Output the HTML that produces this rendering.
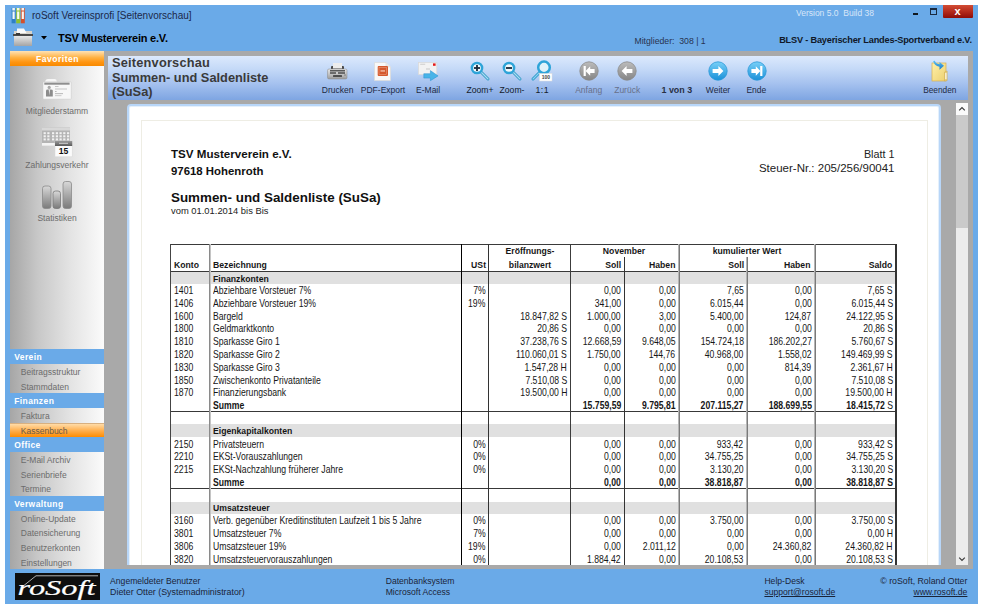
<!DOCTYPE html>
<html><head><meta charset="utf-8">
<style>
*{margin:0;padding:0;box-sizing:border-box}
html,body{width:983px;height:610px;overflow:hidden;background:#fff;font-family:"Liberation Sans",sans-serif}
.a{position:absolute}
.t{position:absolute;line-height:0;white-space:pre}
svg{position:absolute;overflow:visible}
</style></head><body>

<div class='a' style='left:5px;top:5px;width:973px;height:599px;background:#6aaae8'></div>
<div class='a' style='left:10px;top:51px;width:963px;height:518px;background:#a9a9a9'></div>
<svg style="left:11px;top:7px" width="15" height="17" viewBox="0 0 15 17">
<rect x="0.6" y="1" width="4" height="15.3" fill="#2f80c4"/><rect x="1.3" y="1" width="2.6" height="2.5" fill="#f0f4f8"/><rect x="1.5" y="4.5" width="2.2" height="7.5" fill="#f4f8fc"/>
<rect x="5.2" y="1" width="4" height="15.3" fill="#90c030"/><rect x="5.9" y="1" width="2.6" height="2.5" fill="#f4f8ec"/><rect x="6.1" y="4.5" width="2.2" height="7.5" fill="#f8fcf0"/>
<rect x="9.8" y="1" width="4" height="15.3" fill="#d4502c"/><rect x="10.5" y="1" width="2.6" height="2.5" fill="#f8f0ec"/><rect x="10.7" y="4.5" width="2.2" height="7.5" fill="#fcf4f0"/>
</svg>
<div class='t' style='top:15.54px;font-size:10px;font-weight:normal;color:#1c2848;left:32px;'>roSoft Vereinsprofi [Seitenvorschau]</div>
<div class='t' style='top:13.05px;font-size:8.5px;font-weight:normal;color:#d8e6f8;left:796px;'>Version 5.0&nbsp; Build 38</div>
<div class='a' style='left:913px;top:12.5px;width:5px;height:2px;background:#101820'></div>
<div class='a' style='left:930px;top:8px;width:7px;height:7px;border:1px solid #1a2a40;border-top-width:2px'></div>
<div class='a' style='left:943px;top:5px;width:30px;height:13px;background:linear-gradient(#d24c34,#b42a1c 50%,#8e0c08);border-radius:0 0 1px 1px'></div>
<div class='t' style='top:11.19px;font-size:11px;font-weight:bold;color:#fff;left:757.5px;width:400px;text-align:center;'>x</div>
<svg style="left:13px;top:28px" width="20" height="18" viewBox="0 0 20 18">
<defs><linearGradient id="fg" x1="0" y1="0" x2="0" y2="1"><stop offset="0" stop-color="#e8e8e8"/><stop offset="1" stop-color="#a4a4a4"/></linearGradient></defs>
<rect x="1" y="3" width="18" height="5" fill="#d8d4cc"/>
<path d="M4 0.5h7l2.5 4.5h-9.5z" fill="#fafafa"/>
<rect x="0" y="6" width="20" height="2" fill="#4a4a4a"/>
<rect x="3" y="5" width="4" height="2" fill="#3a3a3a"/>
<rect x="1" y="8" width="18" height="10" fill="url(#fg)"/>
</svg>
<svg style="left:41px;top:36px" width="6" height="4" viewBox="0 0 6 4"><path d="M0 0h6l-3 3.5z" fill="#000"/></svg>
<div class='t' style='top:38.19px;font-size:11px;font-weight:bold;color:#000;letter-spacing:-0.23px;left:58px;'>TSV Musterverein e.V.</div>
<div class='t' style='top:41.39px;font-size:8.7px;font-weight:normal;color:#283450;left:634.4px;'>Mitglieder:&nbsp; 308 | 1</div>
<div class='t' style='top:40.01px;font-size:9.2px;font-weight:bold;color:#101828;letter-spacing:-0.19px;right:11px;margin-right:0.19px;'>BLSV - Bayerischer Landes-Sportverband e.V.</div>
<div class='a' style='left:10px;top:51px;width:94px;height:299px;background:linear-gradient(to right,#a6a6a6 0%,#c8c8c8 30%,#e4e4e4 65%,#fbfbfb 100%)'></div>
<div class='a' style='left:10px;top:51px;width:94px;height:15px;background:linear-gradient(#ffe2b4 0%,#ffb040 45%,#ff9410 75%,#f88a00 100%)'></div>
<div class='t' style='top:58.72px;font-size:8.6px;font-weight:bold;color:#fff;letter-spacing:0.5px;left:-142.5px;width:400px;text-align:center;'>Favoriten</div>
<svg style="left:43px;top:78px" width="29" height="22" viewBox="0 0 29 22">
<path d="M2 4 Q2.5 1 5 1 H12 Q13.5 1 14 4z" fill="#f6f6f6"/>
<rect x="0" y="3.8" width="28.3" height="17.4" rx="0.8" fill="#f7f7f7" stroke="#c4c4c4" stroke-width="0.5"/>
<rect x="1.3" y="4.6" width="25.3" height="2.1" fill="#8e8e8e"/>
<circle cx="6.2" cy="9.4" r="1.6" fill="#a8a8a8"/>
<path d="M3 18.5 V12.8 Q3 11.6 4.6 11.6 H7.8 Q9.8 11.6 9.8 12.8 V18.5z" fill="#8c8c8c"/>
<path d="M5.7 11.6 L6.4 17.5 L7.1 11.6z" fill="#e4e4e4"/>
<rect x="12" y="8.2" width="3.5" height="0.7" fill="#b0b0b0"/><rect x="12" y="10.6" width="12" height="0.8" fill="#b8b8b8"/>
<rect x="12" y="13.2" width="1.6" height="0.7" fill="#a0a0a0"/><rect x="12" y="15.3" width="8" height="0.8" fill="#a8a8a8"/><rect x="12" y="17.4" width="6.5" height="0.7" fill="#b8b8b8"/>
</svg>
<div class='t' style='top:111.15px;font-size:8.5px;font-weight:normal;color:#6c6c6c;left:-143px;width:400px;text-align:center;'>Mitgliederstamm</div>
<svg style="left:42px;top:127px" width="31" height="31" viewBox="0 0 31 31"><rect x="0" y="0.5" width="28" height="18.5" fill="#b4b4b4"/><rect x="0" y="0.5" width="28" height="3" fill="#d8d8d8"/><rect x="1.6" y="5.2" width="2.2" height="2" fill="#f2f2f2"/><rect x="5.3" y="5.2" width="2.2" height="2" fill="#f2f2f2"/><rect x="10.0" y="5.2" width="2.2" height="2" fill="#f2f2f2"/><rect x="13.8" y="5.2" width="2.2" height="2" fill="#f2f2f2"/><rect x="17.5" y="5.2" width="2.2" height="2" fill="#f2f2f2"/><rect x="21.2" y="5.2" width="2.2" height="2" fill="#f2f2f2"/><rect x="25.0" y="5.2" width="2.2" height="2" fill="#f2f2f2"/><rect x="1.6" y="8.3" width="2.2" height="2" fill="#f2f2f2"/><rect x="5.3" y="8.3" width="2.2" height="2" fill="#f2f2f2"/><rect x="10.0" y="8.3" width="2.2" height="2" fill="#f2f2f2"/><rect x="13.8" y="8.3" width="2.2" height="2" fill="#f2f2f2"/><rect x="17.5" y="8.3" width="2.2" height="2" fill="#f2f2f2"/><rect x="21.2" y="8.3" width="2.2" height="2" fill="#f2f2f2"/><rect x="25.0" y="8.3" width="2.2" height="2" fill="#f2f2f2"/><rect x="1.6" y="11.4" width="2.2" height="2" fill="#f2f2f2"/><rect x="5.3" y="11.4" width="2.2" height="2" fill="#f2f2f2"/><rect x="10.0" y="11.4" width="2.2" height="2" fill="#f2f2f2"/><rect x="13.8" y="11.4" width="2.2" height="2" fill="#f2f2f2"/><rect x="17.5" y="11.4" width="2.2" height="2" fill="#f2f2f2"/><rect x="21.2" y="11.4" width="2.2" height="2" fill="#f2f2f2"/><rect x="25.0" y="11.4" width="2.2" height="2" fill="#f2f2f2"/><rect x="0" y="16" width="13" height="2.8" fill="#f4f4f4"/><defs><linearGradient id="calh" x1="0" y1="0" x2="0" y2="1"><stop offset="0" stop-color="#9a9a9a"/><stop offset="1" stop-color="#5a5a5a"/></linearGradient></defs><rect x="13" y="14" width="17.2" height="15.8" fill="#fbfbfb" stroke="#d8d8d8" stroke-width="0.5"/><rect x="13" y="14" width="17.2" height="5" fill="url(#calh)"/><rect x="17" y="15.8" width="9" height="1" fill="#d0d0d0"/><text x="21.6" y="27" font-family="Liberation Sans" font-weight="bold" font-size="8.6" text-anchor="middle" fill="#111">15</text></svg>
<div class='t' style='top:165.05px;font-size:8.5px;font-weight:normal;color:#6c6c6c;left:-143px;width:400px;text-align:center;'>Zahlungsverkehr</div>
<svg style="left:42px;top:181px" width="30" height="28" viewBox="0 0 30 28">
<defs><linearGradient id="bg1" x1="0" y1="0" x2="0" y2="1"><stop offset="0" stop-color="#d8d8d8"/><stop offset="1" stop-color="#7a7a7a"/></linearGradient></defs>
<rect x="0.5" y="5" width="8.5" height="22.5" rx="2.5" fill="url(#bg1)" stroke="#8a8a8a" stroke-width="0.8"/>
<rect x="11" y="10" width="7.5" height="17.5" rx="2.5" fill="url(#bg1)" stroke="#7a7a7a" stroke-width="0.8"/>
<rect x="21" y="0.5" width="8.5" height="27" rx="2.5" fill="url(#bg1)" stroke="#8a8a8a" stroke-width="0.8"/>
</svg>
<div class='t' style='top:217.75px;font-size:8.5px;font-weight:normal;color:#6c6c6c;left:-143px;width:400px;text-align:center;'>Statistiken</div>
<div class='a' style='left:10px;top:349px;width:94px;height:15px;background:#6aaae8'></div>
<div class='t' style='top:357.05px;font-size:8.5px;font-weight:bold;color:#fff;letter-spacing:0.4px;left:14.2px;'>Verein</div>
<div class='a' style='left:10px;top:364px;width:94px;height:15px;background:linear-gradient(to right,#a6a6a6 0%,#c8c8c8 30%,#e4e4e4 65%,#fbfbfb 100%)'></div>
<div class='t' style='top:371.55px;font-size:8.5px;font-weight:normal;color:#6c6c6c;left:20.8px;'>Beitragsstruktur</div>
<div class='a' style='left:10px;top:379px;width:94px;height:14px;background:linear-gradient(to right,#a6a6a6 0%,#c8c8c8 30%,#e4e4e4 65%,#fbfbfb 100%)'></div>
<div class='t' style='top:386.55px;font-size:8.5px;font-weight:normal;color:#6c6c6c;left:20.8px;'>Stammdaten</div>
<div class='a' style='left:10px;top:393px;width:94px;height:15px;background:#6aaae8'></div>
<div class='t' style='top:401.05px;font-size:8.5px;font-weight:bold;color:#fff;letter-spacing:0.4px;left:14.2px;'>Finanzen</div>
<div class='a' style='left:10px;top:408px;width:94px;height:15px;background:linear-gradient(to right,#a6a6a6 0%,#c8c8c8 30%,#e4e4e4 65%,#fbfbfb 100%)'></div>
<div class='t' style='top:415.55px;font-size:8.5px;font-weight:normal;color:#6c6c6c;left:20.8px;'>Faktura</div>
<div class='a' style='left:10px;top:423px;width:94px;height:14px;background:linear-gradient(#ffdca8 0%,#ffb050 50%,#ff8c00 100%);border-top:1px solid #d8b080'></div>
<div class='t' style='top:430.55px;font-size:8.5px;font-weight:normal;color:#6a5a48;left:20.8px;'>Kassenbuch</div>
<div class='a' style='left:10px;top:437px;width:94px;height:15px;background:#6aaae8'></div>
<div class='t' style='top:445.05px;font-size:8.5px;font-weight:bold;color:#fff;letter-spacing:0.4px;left:14.2px;'>Office</div>
<div class='a' style='left:10px;top:452px;width:94px;height:15px;background:linear-gradient(to right,#a6a6a6 0%,#c8c8c8 30%,#e4e4e4 65%,#fbfbfb 100%)'></div>
<div class='t' style='top:459.55px;font-size:8.5px;font-weight:normal;color:#6c6c6c;left:20.8px;'>E-Mail Archiv</div>
<div class='a' style='left:10px;top:467px;width:94px;height:14px;background:linear-gradient(to right,#a6a6a6 0%,#c8c8c8 30%,#e4e4e4 65%,#fbfbfb 100%)'></div>
<div class='t' style='top:474.55px;font-size:8.5px;font-weight:normal;color:#6c6c6c;left:20.8px;'>Serienbriefe</div>
<div class='a' style='left:10px;top:481px;width:94px;height:15px;background:linear-gradient(to right,#a6a6a6 0%,#c8c8c8 30%,#e4e4e4 65%,#fbfbfb 100%)'></div>
<div class='t' style='top:488.55px;font-size:8.5px;font-weight:normal;color:#6c6c6c;left:20.8px;'>Termine</div>
<div class='a' style='left:10px;top:496px;width:94px;height:15px;background:#6aaae8'></div>
<div class='t' style='top:504.05px;font-size:8.5px;font-weight:bold;color:#fff;letter-spacing:0.4px;left:14.2px;'>Verwaltung</div>
<div class='a' style='left:10px;top:511px;width:94px;height:14px;background:linear-gradient(to right,#a6a6a6 0%,#c8c8c8 30%,#e4e4e4 65%,#fbfbfb 100%)'></div>
<div class='t' style='top:518.55px;font-size:8.5px;font-weight:normal;color:#6c6c6c;left:20.8px;'>Online-Update</div>
<div class='a' style='left:10px;top:525px;width:94px;height:15px;background:linear-gradient(to right,#a6a6a6 0%,#c8c8c8 30%,#e4e4e4 65%,#fbfbfb 100%)'></div>
<div class='t' style='top:532.55px;font-size:8.5px;font-weight:normal;color:#6c6c6c;left:20.8px;'>Datensicherung</div>
<div class='a' style='left:10px;top:540px;width:94px;height:15px;background:linear-gradient(to right,#a6a6a6 0%,#c8c8c8 30%,#e4e4e4 65%,#fbfbfb 100%)'></div>
<div class='t' style='top:547.55px;font-size:8.5px;font-weight:normal;color:#6c6c6c;left:20.8px;'>Benutzerkonten</div>
<div class='a' style='left:10px;top:555px;width:94px;height:14px;background:linear-gradient(to right,#a6a6a6 0%,#c8c8c8 30%,#e4e4e4 65%,#fbfbfb 100%)'></div>
<div class='t' style='top:562.55px;font-size:8.5px;font-weight:normal;color:#6c6c6c;left:20.8px;'>Einstellungen</div>
<div class='a' style='left:108px;top:56px;width:860px;height:44px;background:linear-gradient(#dce9fd 0%,#c4d9f7 30%,#a6c2ef 62%,#7ea5e2 100%)'></div>
<div class='t' style='top:63.36px;font-size:12.8px;font-weight:bold;color:#3a3a3a;letter-spacing:0.2px;left:112px;'>Seitenvorschau</div>
<div class='t' style='top:77.66px;font-size:12.8px;font-weight:bold;color:#3a3a3a;left:112px;'>Summen- und Saldenliste</div>
<div class='t' style='top:91.96px;font-size:12.8px;font-weight:bold;color:#3a3a3a;left:112px;'>(SuSa)</div>
<svg style="left:326px;top:62px" width="22" height="18" viewBox="0 0 22 18">
<defs><linearGradient id="pg" x1="0" y1="0" x2="0" y2="1"><stop offset="0" stop-color="#e4e4e4"/><stop offset="0.5" stop-color="#c4c4c4"/><stop offset="1" stop-color="#9a9a9a"/></linearGradient></defs>
<rect x="5" y="4" width="13" height="5" rx="1" fill="#4a4a4a"/>
<rect x="7" y="1" width="9" height="5.5" fill="#ececec"/>
<rect x="1.5" y="7" width="19.5" height="10" rx="1.5" fill="url(#pg)" stroke="#888" stroke-width="0.5"/>
<rect x="4" y="8" width="15" height="1.5" fill="#5a5a5a"/>
<rect x="4" y="10.2" width="6" height="1.6" fill="#555"/><rect x="12" y="10.2" width="7" height="1.6" fill="#555"/>
<rect x="7" y="13.3" width="9" height="1.5" rx="0.5" fill="#2e2e2e"/>
<rect x="18.5" y="12.5" width="1" height="1" fill="#444"/>
</svg>
<div class='t' style='top:90.25px;font-size:8.5px;font-weight:normal;color:#1e2a44;left:137.60000000000002px;width:400px;text-align:center;'>Drucken</div>
<svg style="left:374px;top:62px" width="17" height="19" viewBox="0 0 17 19">
<path d="M0.5 0.5 H12 L16.5 5 V18.5 H0.5z" fill="#f8f8f8" stroke="#dcdcdc" stroke-width="0.8"/>
<path d="M12 0.5 V5 H16.5" fill="#e8e8e8" stroke="#dcdcdc" stroke-width="0.6"/>
<rect x="3.7" y="4" width="10.3" height="10" rx="1" fill="#d4582e"/>
<rect x="5" y="5.6" width="7.7" height="6.8" fill="none" stroke="#f0a888" stroke-width="0.5"/>
<rect x="6.5" y="8.4" width="4.5" height="1.1" fill="#f8d8c8"/>
</svg>
<div class='t' style='top:90.25px;font-size:8.5px;font-weight:normal;color:#1e2a44;left:183px;width:400px;text-align:center;'>PDF-Export</div>
<svg style="left:418px;top:62px" width="21" height="20" viewBox="0 0 21 20">
<rect x="0.4" y="0.4" width="18.4" height="12.2" fill="#f2f2f2" stroke="#d8d8d8" stroke-width="0.7"/>
<rect x="15" y="1.4" width="2.6" height="2.4" fill="#e41818"/>
<rect x="2.2" y="1.8" width="5" height="0.8" fill="#c4c4c4"/><rect x="8" y="6.6" width="4" height="0.8" fill="#bbb"/>
<path d="M5.8 11.7 H12.4 V8.6 L20.1 13.9 L12.4 18.7 V16.1 H5.8z" fill="#48b4e8" stroke="#2a90d0" stroke-width="0.5"/>
</svg>
<div class='t' style='top:90.25px;font-size:8.5px;font-weight:normal;color:#1e2a44;left:228.10000000000002px;width:400px;text-align:center;'>E-Mail</div>
<svg style="left:467.8px;top:60.099999999999994px" width="22" height="22" viewBox="0 0 22 22"><line x1="13" y1="12" x2="20" y2="19" stroke="#3a9cc8" stroke-width="3" stroke-linecap="round"/><line x1="13" y1="12" x2="20" y2="19" stroke="#a8dcf0" stroke-width="1.1" stroke-linecap="round"/><circle cx="9" cy="8" r="5.1" fill="#f4fafc" stroke="#2ea4d8" stroke-width="2.5"/><rect x="6" y="7.1" width="6" height="1.8" fill="#1a2a3a"/><rect x="8.1" y="5" width="1.8" height="6" fill="#1a2a3a"/></svg>
<div class='t' style='top:90.22px;font-size:8.6px;font-weight:normal;color:#141c2c;left:280px;width:400px;text-align:center;'>Zoom+</div>
<svg style="left:500.1px;top:60.099999999999994px" width="22" height="22" viewBox="0 0 22 22"><line x1="13" y1="12" x2="20" y2="19" stroke="#3a9cc8" stroke-width="3" stroke-linecap="round"/><line x1="13" y1="12" x2="20" y2="19" stroke="#a8dcf0" stroke-width="1.1" stroke-linecap="round"/><circle cx="9" cy="8" r="5.1" fill="#f4fafc" stroke="#2ea4d8" stroke-width="2.5"/><rect x="6" y="7.1" width="6" height="1.8" fill="#1a2a3a"/></svg>
<div class='t' style='top:90.22px;font-size:8.6px;font-weight:normal;color:#141c2c;left:312px;width:400px;text-align:center;'>Zoom-</div>
<svg style="left:531px;top:59px" width="23" height="23" viewBox="0 0 23 23">
<line x1="9" y1="13" x2="2" y2="20" stroke="#2a98c8" stroke-width="3" stroke-linecap="round"/>
<line x1="9" y1="13" x2="2" y2="20" stroke="#8ad0f0" stroke-width="1.2" stroke-linecap="round"/>
<circle cx="13" cy="8.4" r="5.8" fill="#dff2fa" stroke="#2ea4d8" stroke-width="2.5"/>
<rect x="8.5" y="14.5" width="12.5" height="7.5" fill="#fff" stroke="#ddd" stroke-width="0.5"/>
<text x="14.8" y="20.3" font-family="Liberation Sans" font-size="5" font-weight="bold" text-anchor="middle" fill="#444">100</text>
</svg>
<div class='t' style='top:90.15px;font-size:8.8px;font-weight:normal;color:#141c2c;letter-spacing:0.4px;left:342.29999999999995px;width:400px;text-align:center;'>1:1</div>
<svg style="left:578.8px;top:60.5px" width="20" height="20" viewBox="0 0 20 20"><defs><linearGradient id="nb588" x1="0" y1="0" x2="0" y2="1"><stop offset="0" stop-color="#bcbcbc"/><stop offset="1" stop-color="#858585"/></linearGradient></defs><circle cx="10" cy="10" r="9.2" fill="url(#nb588)" stroke="#8a8a8a" stroke-width="0.8"/><rect x="4.6" y="5" width="2.2" height="10" fill="#fff"/><path d="M6.6 10 L11.2 5.2 V8 H15.6 V12 H11.2 V14.8z" fill="#fff"/></svg>
<div class='t' style='top:90.25px;font-size:8.5px;font-weight:normal;color:#68708a;left:388.70000000000005px;width:400px;text-align:center;'>Anfang</div>
<svg style="left:617.3px;top:60.5px" width="20" height="20" viewBox="0 0 20 20"><defs><linearGradient id="nb627" x1="0" y1="0" x2="0" y2="1"><stop offset="0" stop-color="#bcbcbc"/><stop offset="1" stop-color="#858585"/></linearGradient></defs><circle cx="10" cy="10" r="9.2" fill="url(#nb627)" stroke="#8a8a8a" stroke-width="0.8"/><path d="M4.6 10 L9.6 5 V8 H15.4 V12 H9.6 V15z" fill="#fff"/></svg>
<div class='t' style='top:90.25px;font-size:8.5px;font-weight:normal;color:#68708a;left:427.20000000000005px;width:400px;text-align:center;'>Zurück</div>
<div class='t' style='top:90.12px;font-size:8.9px;font-weight:bold;color:#283044;left:476.79999999999995px;width:400px;text-align:center;'>1 von 3</div>
<svg style="left:708px;top:60.5px" width="20" height="20" viewBox="0 0 20 20"><defs><linearGradient id="nb718" x1="0" y1="0" x2="0" y2="1"><stop offset="0" stop-color="#78d0f8"/><stop offset="1" stop-color="#1a90d8"/></linearGradient></defs><circle cx="10" cy="10" r="9.2" fill="url(#nb718)" stroke="#2a98d8" stroke-width="0.8"/><path d="M15.4 10 L10.4 5 V8 H4.6 V12 H10.4 V15z" fill="#fff"/></svg>
<div class='t' style='top:90.25px;font-size:8.5px;font-weight:normal;color:#1e2a44;left:518px;width:400px;text-align:center;'>Weiter</div>
<svg style="left:746.5px;top:60.5px" width="20" height="20" viewBox="0 0 20 20"><defs><linearGradient id="nb756" x1="0" y1="0" x2="0" y2="1"><stop offset="0" stop-color="#78d0f8"/><stop offset="1" stop-color="#1a90d8"/></linearGradient></defs><circle cx="10" cy="10" r="9.2" fill="url(#nb756)" stroke="#2a98d8" stroke-width="0.8"/><rect x="13.2" y="5" width="2.2" height="10" fill="#fff"/><path d="M13.4 10 L8.8 5.2 V8 H4.4 V12 H8.8 V14.8z" fill="#fff"/></svg>
<div class='t' style='top:90.25px;font-size:8.5px;font-weight:normal;color:#1e2a44;left:556.4px;width:400px;text-align:center;'>Ende</div>
<svg style="left:931px;top:60px" width="19" height="22" viewBox="0 0 19 22">
<defs><linearGradient id="yg" x1="0" y1="0" x2="1" y2="1"><stop offset="0" stop-color="#fff0a8"/><stop offset="1" stop-color="#ecd070"/></linearGradient>
<linearGradient id="ag" x1="0" y1="0" x2="0" y2="1"><stop offset="0" stop-color="#5cc0f4"/><stop offset="1" stop-color="#1a78c8"/></linearGradient></defs>
<rect x="1" y="3" width="14" height="18" fill="url(#yg)" stroke="#d8b050" stroke-width="0.7"/>
<path d="M13.5 12 L16.2 11 V20.5 L13.5 21z" fill="#e8d080" stroke="#c8a040" stroke-width="0.4"/>
<rect x="14.4" y="13" width="1" height="6" fill="#fff"/>
<path d="M2.2 1 Q3 5.5 8.5 6.8 L8.5 9.8 L13 5.8 L8.5 2 L8.5 4.2 Q5 4 3.8 0.8z" fill="url(#ag)"/>
</svg>
<div class='t' style='top:90.32px;font-size:8.3px;font-weight:normal;color:#1e2a44;left:739.8px;width:400px;text-align:center;'>Beenden</div>
<div class="a" style="left:10px;top:100px;width:963px;height:465px;overflow:hidden">
<div class="a" style="left:117px;top:4px;width:814px;height:470px;background:#fff;border:2px solid #b8d6f8;border-radius:4px 4px 0 0;box-shadow:inset 0 0 0 1px #e4f0fc"></div>
<div class="a" style="left:131px;top:20px;width:787px;height:460px;border:1px solid #eeede4"></div>
</div>
<div class='t' style='top:154.18px;font-size:11.6px;font-weight:bold;color:#111;left:171px;'>TSV Musterverein e.V.</div>
<div class='t' style='top:170.95px;font-size:11.4px;font-weight:bold;color:#111;left:171px;'>97618 Hohenroth</div>
<div class='t' style='top:197.56px;font-size:13.4px;font-weight:bold;color:#111;left:171px;'>Summen- und Saldenliste (SuSa)</div>
<div class='t' style='top:211.04px;font-size:9.4px;font-weight:normal;color:#222;left:171px;'>vom 01.01.2014 bis Bis</div>
<div class='t' style='top:154.16px;font-size:10.8px;font-weight:normal;color:#222;right:88.5px;'>Blatt 1</div>
<div class='t' style='top:168.12px;font-size:11.5px;font-weight:normal;color:#222;right:88.5px;'>Steuer-Nr.: 205/256/90041</div>
<div class="a" style="left:0;top:0;width:983px;height:565px;overflow:hidden">
<div class='a' style='left:171px;top:272px;width:725px;height:12px;background:#e0e0e0'></div>
<div class='a' style='left:171px;top:424px;width:725px;height:13px;background:#e0e0e0'></div>
<div class='a' style='left:171px;top:502px;width:725px;height:12px;background:#e0e0e0'></div>
<div class='a' style='left:170px;top:244px;width:727px;height:1px;background:#3a3a3a'></div>
<div class='a' style='left:170px;top:271px;width:727px;height:1px;background:#383838'></div>
<div class='a' style='left:170px;top:411px;width:727px;height:1px;background:#383838'></div>
<div class='a' style='left:170px;top:488px;width:727px;height:1px;background:#383838'></div>
<div class='a' style='left:170px;top:244px;width:1px;height:330px;background:#444'></div>
<div class='a' style='left:209px;top:244px;width:1px;height:330px;background:#8a8a8a'></div>
<div class='a' style='left:210px;top:244px;width:1px;height:330px;background:#c4c4c4'></div>
<div class='a' style='left:461px;top:244px;width:1px;height:330px;background:#000'></div>
<div class='a' style='left:488px;top:244px;width:1px;height:330px;background:#333'></div>
<div class='a' style='left:570px;top:244px;width:1px;height:330px;background:#3c3c3c'></div>
<div class='a' style='left:624px;top:257px;width:1px;height:330px;background:#333'></div>
<div class='a' style='left:678px;top:244px;width:1px;height:330px;background:#b4b4b4'></div>
<div class='a' style='left:679px;top:244px;width:1px;height:330px;background:#7a7a7a'></div>
<div class='a' style='left:746px;top:257px;width:1px;height:330px;background:#b4b4b4'></div>
<div class='a' style='left:747px;top:257px;width:1px;height:330px;background:#7a7a7a'></div>
<div class='a' style='left:814px;top:244px;width:1px;height:330px;background:#b4b4b4'></div>
<div class='a' style='left:815px;top:244px;width:1px;height:330px;background:#7a7a7a'></div>
<div class='a' style='left:895px;top:244px;width:2px;height:330px;background:#333'></div>
<div class='t' style='top:264.98px;font-size:9.3px;font-weight:bold;color:#161616;transform:scaleX(0.93);transform-origin:left 0;left:174px;'>Konto</div>
<div class='t' style='top:264.98px;font-size:9.3px;font-weight:bold;color:#161616;transform:scaleX(0.93);transform-origin:left 0;left:213px;'>Bezeichnung</div>
<div class='t' style='top:264.98px;font-size:9.3px;font-weight:bold;color:#161616;transform:scaleX(0.93);transform-origin:right 0;right:497.4px;'>USt</div>
<div class='t' style='top:251.38px;font-size:9.3px;font-weight:bold;color:#161616;transform:scaleX(0.93);transform-origin:center 0;left:329.5px;width:400px;text-align:center;'>Eröffnungs-</div>
<div class='t' style='top:264.98px;font-size:9.3px;font-weight:bold;color:#161616;transform:scaleX(0.93);transform-origin:center 0;left:329.5px;width:400px;text-align:center;'>bilanzwert</div>
<div class='t' style='top:251.38px;font-size:9.3px;font-weight:bold;color:#161616;transform:scaleX(0.93);transform-origin:center 0;left:424px;width:400px;text-align:center;'>November</div>
<div class='t' style='top:264.98px;font-size:9.3px;font-weight:bold;color:#161616;transform:scaleX(0.93);transform-origin:right 0;right:362px;'>Soll</div>
<div class='t' style='top:264.98px;font-size:9.3px;font-weight:bold;color:#161616;transform:scaleX(0.93);transform-origin:right 0;right:307.79999999999995px;'>Haben</div>
<div class='t' style='top:251.38px;font-size:9.3px;font-weight:bold;color:#161616;transform:scaleX(0.93);transform-origin:center 0;left:546.6px;width:400px;text-align:center;'>kumulierter Wert</div>
<div class='t' style='top:264.98px;font-size:9.3px;font-weight:bold;color:#161616;transform:scaleX(0.93);transform-origin:right 0;right:239.20000000000005px;'>Soll</div>
<div class='t' style='top:264.98px;font-size:9.3px;font-weight:bold;color:#161616;transform:scaleX(0.93);transform-origin:right 0;right:172.10000000000002px;'>Haben</div>
<div class='t' style='top:264.98px;font-size:9.3px;font-weight:bold;color:#161616;transform:scaleX(0.93);transform-origin:right 0;right:90.39999999999998px;'>Saldo</div>
<div class='t' style='top:278.58px;font-size:9.3px;font-weight:bold;color:#161616;transform:scaleX(0.93);transform-origin:left 0;left:213px;'>Finanzkonten</div>
<div class='t' style='top:430.98px;font-size:9.3px;font-weight:bold;color:#161616;transform:scaleX(0.93);transform-origin:left 0;left:213px;'>Eigenkapitalkonten</div>
<div class='t' style='top:507.98px;font-size:9.3px;font-weight:bold;color:#161616;transform:scaleX(0.93);transform-origin:left 0;left:213px;'>Umsatzsteuer</div>
<div class='t' style='top:291.07px;font-size:10.2px;font-weight:normal;color:#161616;transform:scaleX(0.85);transform-origin:left 0;left:174px;'>1401</div>
<div class='t' style='top:291.07px;font-size:10.2px;font-weight:normal;color:#161616;transform:scaleX(0.85);transform-origin:left 0;left:213px;'>Abziehbare Vorsteuer 7%</div>
<div class='t' style='top:291.07px;font-size:10.2px;font-weight:normal;color:#161616;transform:scaleX(0.85);transform-origin:right 0;right:497.7px;'>7%</div>
<div class='t' style='top:291.07px;font-size:10.2px;font-weight:normal;color:#161616;transform:scaleX(0.85);transform-origin:right 0;right:362px;'>0,00</div>
<div class='t' style='top:291.07px;font-size:10.2px;font-weight:normal;color:#161616;transform:scaleX(0.85);transform-origin:right 0;right:307.5px;'>0,00</div>
<div class='t' style='top:291.07px;font-size:10.2px;font-weight:normal;color:#161616;transform:scaleX(0.85);transform-origin:right 0;right:239.5px;'>7,65</div>
<div class='t' style='top:291.07px;font-size:10.2px;font-weight:normal;color:#161616;transform:scaleX(0.85);transform-origin:right 0;right:171.5px;'>0,00</div>
<div class='t' style='top:291.07px;font-size:10.2px;font-weight:normal;color:#161616;transform:scaleX(0.85);transform-origin:right 0;right:90.20000000000005px;'>7,65 S</div>
<div class='t' style='top:303.85px;font-size:10.2px;font-weight:normal;color:#161616;transform:scaleX(0.85);transform-origin:left 0;left:174px;'>1406</div>
<div class='t' style='top:303.85px;font-size:10.2px;font-weight:normal;color:#161616;transform:scaleX(0.85);transform-origin:left 0;left:213px;'>Abziehbare Vorsteuer 19%</div>
<div class='t' style='top:303.85px;font-size:10.2px;font-weight:normal;color:#161616;transform:scaleX(0.85);transform-origin:right 0;right:497.7px;'>19%</div>
<div class='t' style='top:303.85px;font-size:10.2px;font-weight:normal;color:#161616;transform:scaleX(0.85);transform-origin:right 0;right:362px;'>341,00</div>
<div class='t' style='top:303.85px;font-size:10.2px;font-weight:normal;color:#161616;transform:scaleX(0.85);transform-origin:right 0;right:307.5px;'>0,00</div>
<div class='t' style='top:303.85px;font-size:10.2px;font-weight:normal;color:#161616;transform:scaleX(0.85);transform-origin:right 0;right:239.5px;'>6.015,44</div>
<div class='t' style='top:303.85px;font-size:10.2px;font-weight:normal;color:#161616;transform:scaleX(0.85);transform-origin:right 0;right:171.5px;'>0,00</div>
<div class='t' style='top:303.85px;font-size:10.2px;font-weight:normal;color:#161616;transform:scaleX(0.85);transform-origin:right 0;right:90.20000000000005px;'>6.015,44 S</div>
<div class='t' style='top:316.64px;font-size:10.2px;font-weight:normal;color:#161616;transform:scaleX(0.85);transform-origin:left 0;left:174px;'>1600</div>
<div class='t' style='top:316.64px;font-size:10.2px;font-weight:normal;color:#161616;transform:scaleX(0.85);transform-origin:left 0;left:213px;'>Bargeld</div>
<div class='t' style='top:316.64px;font-size:10.2px;font-weight:normal;color:#161616;transform:scaleX(0.85);transform-origin:right 0;right:415.79999999999995px;'>18.847,82 S</div>
<div class='t' style='top:316.64px;font-size:10.2px;font-weight:normal;color:#161616;transform:scaleX(0.85);transform-origin:right 0;right:362px;'>1.000,00</div>
<div class='t' style='top:316.64px;font-size:10.2px;font-weight:normal;color:#161616;transform:scaleX(0.85);transform-origin:right 0;right:307.5px;'>3,00</div>
<div class='t' style='top:316.64px;font-size:10.2px;font-weight:normal;color:#161616;transform:scaleX(0.85);transform-origin:right 0;right:239.5px;'>5.400,00</div>
<div class='t' style='top:316.64px;font-size:10.2px;font-weight:normal;color:#161616;transform:scaleX(0.85);transform-origin:right 0;right:171.5px;'>124,87</div>
<div class='t' style='top:316.64px;font-size:10.2px;font-weight:normal;color:#161616;transform:scaleX(0.85);transform-origin:right 0;right:90.20000000000005px;'>24.122,95 S</div>
<div class='t' style='top:329.42px;font-size:10.2px;font-weight:normal;color:#161616;transform:scaleX(0.85);transform-origin:left 0;left:174px;'>1800</div>
<div class='t' style='top:329.42px;font-size:10.2px;font-weight:normal;color:#161616;transform:scaleX(0.85);transform-origin:left 0;left:213px;'>Geldmarktkonto</div>
<div class='t' style='top:329.42px;font-size:10.2px;font-weight:normal;color:#161616;transform:scaleX(0.85);transform-origin:right 0;right:415.79999999999995px;'>20,86 S</div>
<div class='t' style='top:329.42px;font-size:10.2px;font-weight:normal;color:#161616;transform:scaleX(0.85);transform-origin:right 0;right:362px;'>0,00</div>
<div class='t' style='top:329.42px;font-size:10.2px;font-weight:normal;color:#161616;transform:scaleX(0.85);transform-origin:right 0;right:307.5px;'>0,00</div>
<div class='t' style='top:329.42px;font-size:10.2px;font-weight:normal;color:#161616;transform:scaleX(0.85);transform-origin:right 0;right:239.5px;'>0,00</div>
<div class='t' style='top:329.42px;font-size:10.2px;font-weight:normal;color:#161616;transform:scaleX(0.85);transform-origin:right 0;right:171.5px;'>0,00</div>
<div class='t' style='top:329.42px;font-size:10.2px;font-weight:normal;color:#161616;transform:scaleX(0.85);transform-origin:right 0;right:90.20000000000005px;'>20,86 S</div>
<div class='t' style='top:342.21px;font-size:10.2px;font-weight:normal;color:#161616;transform:scaleX(0.85);transform-origin:left 0;left:174px;'>1810</div>
<div class='t' style='top:342.21px;font-size:10.2px;font-weight:normal;color:#161616;transform:scaleX(0.85);transform-origin:left 0;left:213px;'>Sparkasse Giro 1</div>
<div class='t' style='top:342.21px;font-size:10.2px;font-weight:normal;color:#161616;transform:scaleX(0.85);transform-origin:right 0;right:415.79999999999995px;'>37.238,76 S</div>
<div class='t' style='top:342.21px;font-size:10.2px;font-weight:normal;color:#161616;transform:scaleX(0.85);transform-origin:right 0;right:362px;'>12.668,59</div>
<div class='t' style='top:342.21px;font-size:10.2px;font-weight:normal;color:#161616;transform:scaleX(0.85);transform-origin:right 0;right:307.5px;'>9.648,05</div>
<div class='t' style='top:342.21px;font-size:10.2px;font-weight:normal;color:#161616;transform:scaleX(0.85);transform-origin:right 0;right:239.5px;'>154.724,18</div>
<div class='t' style='top:342.21px;font-size:10.2px;font-weight:normal;color:#161616;transform:scaleX(0.85);transform-origin:right 0;right:171.5px;'>186.202,27</div>
<div class='t' style='top:342.21px;font-size:10.2px;font-weight:normal;color:#161616;transform:scaleX(0.85);transform-origin:right 0;right:90.20000000000005px;'>5.760,67 S</div>
<div class='t' style='top:355.00px;font-size:10.2px;font-weight:normal;color:#161616;transform:scaleX(0.85);transform-origin:left 0;left:174px;'>1820</div>
<div class='t' style='top:355.00px;font-size:10.2px;font-weight:normal;color:#161616;transform:scaleX(0.85);transform-origin:left 0;left:213px;'>Sparkasse Giro 2</div>
<div class='t' style='top:355.00px;font-size:10.2px;font-weight:normal;color:#161616;transform:scaleX(0.85);transform-origin:right 0;right:415.79999999999995px;'>110.060,01 S</div>
<div class='t' style='top:355.00px;font-size:10.2px;font-weight:normal;color:#161616;transform:scaleX(0.85);transform-origin:right 0;right:362px;'>1.750,00</div>
<div class='t' style='top:355.00px;font-size:10.2px;font-weight:normal;color:#161616;transform:scaleX(0.85);transform-origin:right 0;right:307.5px;'>144,76</div>
<div class='t' style='top:355.00px;font-size:10.2px;font-weight:normal;color:#161616;transform:scaleX(0.85);transform-origin:right 0;right:239.5px;'>40.968,00</div>
<div class='t' style='top:355.00px;font-size:10.2px;font-weight:normal;color:#161616;transform:scaleX(0.85);transform-origin:right 0;right:171.5px;'>1.558,02</div>
<div class='t' style='top:355.00px;font-size:10.2px;font-weight:normal;color:#161616;transform:scaleX(0.85);transform-origin:right 0;right:90.20000000000005px;'>149.469,99 S</div>
<div class='t' style='top:367.78px;font-size:10.2px;font-weight:normal;color:#161616;transform:scaleX(0.85);transform-origin:left 0;left:174px;'>1830</div>
<div class='t' style='top:367.78px;font-size:10.2px;font-weight:normal;color:#161616;transform:scaleX(0.85);transform-origin:left 0;left:213px;'>Sparkasse Giro 3</div>
<div class='t' style='top:367.78px;font-size:10.2px;font-weight:normal;color:#161616;transform:scaleX(0.85);transform-origin:right 0;right:415.79999999999995px;'>1.547,28 H</div>
<div class='t' style='top:367.78px;font-size:10.2px;font-weight:normal;color:#161616;transform:scaleX(0.85);transform-origin:right 0;right:362px;'>0,00</div>
<div class='t' style='top:367.78px;font-size:10.2px;font-weight:normal;color:#161616;transform:scaleX(0.85);transform-origin:right 0;right:307.5px;'>0,00</div>
<div class='t' style='top:367.78px;font-size:10.2px;font-weight:normal;color:#161616;transform:scaleX(0.85);transform-origin:right 0;right:239.5px;'>0,00</div>
<div class='t' style='top:367.78px;font-size:10.2px;font-weight:normal;color:#161616;transform:scaleX(0.85);transform-origin:right 0;right:171.5px;'>814,39</div>
<div class='t' style='top:367.78px;font-size:10.2px;font-weight:normal;color:#161616;transform:scaleX(0.85);transform-origin:right 0;right:90.20000000000005px;'>2.361,67 H</div>
<div class='t' style='top:380.57px;font-size:10.2px;font-weight:normal;color:#161616;transform:scaleX(0.85);transform-origin:left 0;left:174px;'>1850</div>
<div class='t' style='top:380.57px;font-size:10.2px;font-weight:normal;color:#161616;transform:scaleX(0.85);transform-origin:left 0;left:213px;'>Zwischenkonto Privatanteile</div>
<div class='t' style='top:380.57px;font-size:10.2px;font-weight:normal;color:#161616;transform:scaleX(0.85);transform-origin:right 0;right:415.79999999999995px;'>7.510,08 S</div>
<div class='t' style='top:380.57px;font-size:10.2px;font-weight:normal;color:#161616;transform:scaleX(0.85);transform-origin:right 0;right:362px;'>0,00</div>
<div class='t' style='top:380.57px;font-size:10.2px;font-weight:normal;color:#161616;transform:scaleX(0.85);transform-origin:right 0;right:307.5px;'>0,00</div>
<div class='t' style='top:380.57px;font-size:10.2px;font-weight:normal;color:#161616;transform:scaleX(0.85);transform-origin:right 0;right:239.5px;'>0,00</div>
<div class='t' style='top:380.57px;font-size:10.2px;font-weight:normal;color:#161616;transform:scaleX(0.85);transform-origin:right 0;right:171.5px;'>0,00</div>
<div class='t' style='top:380.57px;font-size:10.2px;font-weight:normal;color:#161616;transform:scaleX(0.85);transform-origin:right 0;right:90.20000000000005px;'>7.510,08 S</div>
<div class='t' style='top:393.35px;font-size:10.2px;font-weight:normal;color:#161616;transform:scaleX(0.85);transform-origin:left 0;left:174px;'>1870</div>
<div class='t' style='top:393.35px;font-size:10.2px;font-weight:normal;color:#161616;transform:scaleX(0.85);transform-origin:left 0;left:213px;'>Finanzierungsbank</div>
<div class='t' style='top:393.35px;font-size:10.2px;font-weight:normal;color:#161616;transform:scaleX(0.85);transform-origin:right 0;right:415.79999999999995px;'>19.500,00 H</div>
<div class='t' style='top:393.35px;font-size:10.2px;font-weight:normal;color:#161616;transform:scaleX(0.85);transform-origin:right 0;right:362px;'>0,00</div>
<div class='t' style='top:393.35px;font-size:10.2px;font-weight:normal;color:#161616;transform:scaleX(0.85);transform-origin:right 0;right:307.5px;'>0,00</div>
<div class='t' style='top:393.35px;font-size:10.2px;font-weight:normal;color:#161616;transform:scaleX(0.85);transform-origin:right 0;right:239.5px;'>0,00</div>
<div class='t' style='top:393.35px;font-size:10.2px;font-weight:normal;color:#161616;transform:scaleX(0.85);transform-origin:right 0;right:171.5px;'>0,00</div>
<div class='t' style='top:393.35px;font-size:10.2px;font-weight:normal;color:#161616;transform:scaleX(0.85);transform-origin:right 0;right:90.20000000000005px;'>19.500,00 H</div>
<div class='t' style='top:406.14px;font-size:10.2px;font-weight:normal;color:#161616;transform:scaleX(0.85);transform-origin:left 0;left:213px;'><b>Summe</b></div>
<div class='t' style='top:406.14px;font-size:10.2px;font-weight:normal;color:#161616;transform:scaleX(0.85);transform-origin:right 0;right:362px;'><b>15.759,59</b></div>
<div class='t' style='top:406.14px;font-size:10.2px;font-weight:normal;color:#161616;transform:scaleX(0.85);transform-origin:right 0;right:307.5px;'><b>9.795,81</b></div>
<div class='t' style='top:406.14px;font-size:10.2px;font-weight:normal;color:#161616;transform:scaleX(0.85);transform-origin:right 0;right:239.5px;'><b>207.115,27</b></div>
<div class='t' style='top:406.14px;font-size:10.2px;font-weight:normal;color:#161616;transform:scaleX(0.85);transform-origin:right 0;right:171.5px;'><b>188.699,55</b></div>
<div class='t' style='top:406.14px;font-size:10.2px;font-weight:normal;color:#161616;transform:scaleX(0.85);transform-origin:right 0;right:90.20000000000005px;'><b>18.415,72</b> S</div>
<div class='t' style='top:444.50px;font-size:10.2px;font-weight:normal;color:#161616;transform:scaleX(0.85);transform-origin:left 0;left:174px;'>2150</div>
<div class='t' style='top:444.50px;font-size:10.2px;font-weight:normal;color:#161616;transform:scaleX(0.85);transform-origin:left 0;left:213px;'>Privatsteuern</div>
<div class='t' style='top:444.50px;font-size:10.2px;font-weight:normal;color:#161616;transform:scaleX(0.85);transform-origin:right 0;right:497.7px;'>0%</div>
<div class='t' style='top:444.50px;font-size:10.2px;font-weight:normal;color:#161616;transform:scaleX(0.85);transform-origin:right 0;right:362px;'>0,00</div>
<div class='t' style='top:444.50px;font-size:10.2px;font-weight:normal;color:#161616;transform:scaleX(0.85);transform-origin:right 0;right:307.5px;'>0,00</div>
<div class='t' style='top:444.50px;font-size:10.2px;font-weight:normal;color:#161616;transform:scaleX(0.85);transform-origin:right 0;right:239.5px;'>933,42</div>
<div class='t' style='top:444.50px;font-size:10.2px;font-weight:normal;color:#161616;transform:scaleX(0.85);transform-origin:right 0;right:171.5px;'>0,00</div>
<div class='t' style='top:444.50px;font-size:10.2px;font-weight:normal;color:#161616;transform:scaleX(0.85);transform-origin:right 0;right:90.20000000000005px;'>933,42 S</div>
<div class='t' style='top:457.28px;font-size:10.2px;font-weight:normal;color:#161616;transform:scaleX(0.85);transform-origin:left 0;left:174px;'>2210</div>
<div class='t' style='top:457.28px;font-size:10.2px;font-weight:normal;color:#161616;transform:scaleX(0.85);transform-origin:left 0;left:213px;'>EKSt-Vorauszahlungen</div>
<div class='t' style='top:457.28px;font-size:10.2px;font-weight:normal;color:#161616;transform:scaleX(0.85);transform-origin:right 0;right:497.7px;'>0%</div>
<div class='t' style='top:457.28px;font-size:10.2px;font-weight:normal;color:#161616;transform:scaleX(0.85);transform-origin:right 0;right:362px;'>0,00</div>
<div class='t' style='top:457.28px;font-size:10.2px;font-weight:normal;color:#161616;transform:scaleX(0.85);transform-origin:right 0;right:307.5px;'>0,00</div>
<div class='t' style='top:457.28px;font-size:10.2px;font-weight:normal;color:#161616;transform:scaleX(0.85);transform-origin:right 0;right:239.5px;'>34.755,25</div>
<div class='t' style='top:457.28px;font-size:10.2px;font-weight:normal;color:#161616;transform:scaleX(0.85);transform-origin:right 0;right:171.5px;'>0,00</div>
<div class='t' style='top:457.28px;font-size:10.2px;font-weight:normal;color:#161616;transform:scaleX(0.85);transform-origin:right 0;right:90.20000000000005px;'>34.755,25 S</div>
<div class='t' style='top:470.07px;font-size:10.2px;font-weight:normal;color:#161616;transform:scaleX(0.85);transform-origin:left 0;left:174px;'>2215</div>
<div class='t' style='top:470.07px;font-size:10.2px;font-weight:normal;color:#161616;transform:scaleX(0.85);transform-origin:left 0;left:213px;'>EKSt-Nachzahlung früherer Jahre</div>
<div class='t' style='top:470.07px;font-size:10.2px;font-weight:normal;color:#161616;transform:scaleX(0.85);transform-origin:right 0;right:497.7px;'>0%</div>
<div class='t' style='top:470.07px;font-size:10.2px;font-weight:normal;color:#161616;transform:scaleX(0.85);transform-origin:right 0;right:362px;'>0,00</div>
<div class='t' style='top:470.07px;font-size:10.2px;font-weight:normal;color:#161616;transform:scaleX(0.85);transform-origin:right 0;right:307.5px;'>0,00</div>
<div class='t' style='top:470.07px;font-size:10.2px;font-weight:normal;color:#161616;transform:scaleX(0.85);transform-origin:right 0;right:239.5px;'>3.130,20</div>
<div class='t' style='top:470.07px;font-size:10.2px;font-weight:normal;color:#161616;transform:scaleX(0.85);transform-origin:right 0;right:171.5px;'>0,00</div>
<div class='t' style='top:470.07px;font-size:10.2px;font-weight:normal;color:#161616;transform:scaleX(0.85);transform-origin:right 0;right:90.20000000000005px;'>3.130,20 S</div>
<div class='t' style='top:482.86px;font-size:10.2px;font-weight:normal;color:#161616;transform:scaleX(0.85);transform-origin:left 0;left:213px;'><b>Summe</b></div>
<div class='t' style='top:482.86px;font-size:10.2px;font-weight:normal;color:#161616;transform:scaleX(0.85);transform-origin:right 0;right:362px;'><b>0,00</b></div>
<div class='t' style='top:482.86px;font-size:10.2px;font-weight:normal;color:#161616;transform:scaleX(0.85);transform-origin:right 0;right:307.5px;'><b>0,00</b></div>
<div class='t' style='top:482.86px;font-size:10.2px;font-weight:normal;color:#161616;transform:scaleX(0.85);transform-origin:right 0;right:239.5px;'><b>38.818,87</b></div>
<div class='t' style='top:482.86px;font-size:10.2px;font-weight:normal;color:#161616;transform:scaleX(0.85);transform-origin:right 0;right:171.5px;'><b>0,00</b></div>
<div class='t' style='top:482.86px;font-size:10.2px;font-weight:normal;color:#161616;transform:scaleX(0.85);transform-origin:right 0;right:90.20000000000005px;'><b>38.818,87 S</b></div>
<div class='t' style='top:521.21px;font-size:10.2px;font-weight:normal;color:#161616;transform:scaleX(0.85);transform-origin:left 0;left:174px;'>3160</div>
<div class='t' style='top:521.21px;font-size:10.2px;font-weight:normal;color:#161616;transform:scaleX(0.85);transform-origin:left 0;left:213px;'>Verb. gegenüber Kreditinstituten Laufzeit 1 bis 5 Jahre</div>
<div class='t' style='top:521.21px;font-size:10.2px;font-weight:normal;color:#161616;transform:scaleX(0.85);transform-origin:right 0;right:497.7px;'>0%</div>
<div class='t' style='top:521.21px;font-size:10.2px;font-weight:normal;color:#161616;transform:scaleX(0.85);transform-origin:right 0;right:362px;'>0,00</div>
<div class='t' style='top:521.21px;font-size:10.2px;font-weight:normal;color:#161616;transform:scaleX(0.85);transform-origin:right 0;right:307.5px;'>0,00</div>
<div class='t' style='top:521.21px;font-size:10.2px;font-weight:normal;color:#161616;transform:scaleX(0.85);transform-origin:right 0;right:239.5px;'>3.750,00</div>
<div class='t' style='top:521.21px;font-size:10.2px;font-weight:normal;color:#161616;transform:scaleX(0.85);transform-origin:right 0;right:171.5px;'>0,00</div>
<div class='t' style='top:521.21px;font-size:10.2px;font-weight:normal;color:#161616;transform:scaleX(0.85);transform-origin:right 0;right:90.20000000000005px;'>3.750,00 S</div>
<div class='t' style='top:534.00px;font-size:10.2px;font-weight:normal;color:#161616;transform:scaleX(0.85);transform-origin:left 0;left:174px;'>3801</div>
<div class='t' style='top:534.00px;font-size:10.2px;font-weight:normal;color:#161616;transform:scaleX(0.85);transform-origin:left 0;left:213px;'>Umsatzsteuer 7%</div>
<div class='t' style='top:534.00px;font-size:10.2px;font-weight:normal;color:#161616;transform:scaleX(0.85);transform-origin:right 0;right:497.7px;'>7%</div>
<div class='t' style='top:534.00px;font-size:10.2px;font-weight:normal;color:#161616;transform:scaleX(0.85);transform-origin:right 0;right:362px;'>0,00</div>
<div class='t' style='top:534.00px;font-size:10.2px;font-weight:normal;color:#161616;transform:scaleX(0.85);transform-origin:right 0;right:307.5px;'>0,00</div>
<div class='t' style='top:534.00px;font-size:10.2px;font-weight:normal;color:#161616;transform:scaleX(0.85);transform-origin:right 0;right:239.5px;'>0,00</div>
<div class='t' style='top:534.00px;font-size:10.2px;font-weight:normal;color:#161616;transform:scaleX(0.85);transform-origin:right 0;right:171.5px;'>0,00</div>
<div class='t' style='top:534.00px;font-size:10.2px;font-weight:normal;color:#161616;transform:scaleX(0.85);transform-origin:right 0;right:90.20000000000005px;'>0,00 H</div>
<div class='t' style='top:546.79px;font-size:10.2px;font-weight:normal;color:#161616;transform:scaleX(0.85);transform-origin:left 0;left:174px;'>3806</div>
<div class='t' style='top:546.79px;font-size:10.2px;font-weight:normal;color:#161616;transform:scaleX(0.85);transform-origin:left 0;left:213px;'>Umsatzsteuer 19%</div>
<div class='t' style='top:546.79px;font-size:10.2px;font-weight:normal;color:#161616;transform:scaleX(0.85);transform-origin:right 0;right:497.7px;'>19%</div>
<div class='t' style='top:546.79px;font-size:10.2px;font-weight:normal;color:#161616;transform:scaleX(0.85);transform-origin:right 0;right:362px;'>0,00</div>
<div class='t' style='top:546.79px;font-size:10.2px;font-weight:normal;color:#161616;transform:scaleX(0.85);transform-origin:right 0;right:307.5px;'>2.011,12</div>
<div class='t' style='top:546.79px;font-size:10.2px;font-weight:normal;color:#161616;transform:scaleX(0.85);transform-origin:right 0;right:239.5px;'>0,00</div>
<div class='t' style='top:546.79px;font-size:10.2px;font-weight:normal;color:#161616;transform:scaleX(0.85);transform-origin:right 0;right:171.5px;'>24.360,82</div>
<div class='t' style='top:546.79px;font-size:10.2px;font-weight:normal;color:#161616;transform:scaleX(0.85);transform-origin:right 0;right:90.20000000000005px;'>24.360,82 H</div>
<div class='t' style='top:559.57px;font-size:10.2px;font-weight:normal;color:#161616;transform:scaleX(0.85);transform-origin:left 0;left:174px;'>3820</div>
<div class='t' style='top:559.57px;font-size:10.2px;font-weight:normal;color:#161616;transform:scaleX(0.85);transform-origin:left 0;left:213px;'>Umsatzsteuervorauszahlungen</div>
<div class='t' style='top:559.57px;font-size:10.2px;font-weight:normal;color:#161616;transform:scaleX(0.85);transform-origin:right 0;right:497.7px;'>0%</div>
<div class='t' style='top:559.57px;font-size:10.2px;font-weight:normal;color:#161616;transform:scaleX(0.85);transform-origin:right 0;right:362px;'>1.884,42</div>
<div class='t' style='top:559.57px;font-size:10.2px;font-weight:normal;color:#161616;transform:scaleX(0.85);transform-origin:right 0;right:307.5px;'>0,00</div>
<div class='t' style='top:559.57px;font-size:10.2px;font-weight:normal;color:#161616;transform:scaleX(0.85);transform-origin:right 0;right:239.5px;'>20.108,53</div>
<div class='t' style='top:559.57px;font-size:10.2px;font-weight:normal;color:#161616;transform:scaleX(0.85);transform-origin:right 0;right:171.5px;'>0,00</div>
<div class='t' style='top:559.57px;font-size:10.2px;font-weight:normal;color:#161616;transform:scaleX(0.85);transform-origin:right 0;right:90.20000000000005px;'>20.108,53 S</div>
</div>
<div class='a' style='left:956px;top:103px;width:12px;height:462px;background:#ececec'></div>
<div class='a' style='left:956px;top:103px;width:12px;height:12px;background:#fafafa'></div>
<div class='a' style='left:956px;top:115px;width:12px;height:113px;background:#cacaca'></div>
<svg style="left:956px;top:103px" width="12" height="12" viewBox="0 0 12 12"><path d="M3.2 7.3 L6 4.5 L8.8 7.3" fill="none" stroke="#3a3a3a" stroke-width="1.2"/></svg>
<svg style="left:956px;top:553px" width="12" height="12" viewBox="0 0 12 12"><path d="M3.2 4.7 L6 7.5 L8.8 4.7" fill="none" stroke="#3a3a3a" stroke-width="1.2"/></svg>
<div class='a' style='left:15px;top:573px;width:85px;height:27px;background:#0e0e0e'></div>
<svg style="left:15px;top:573px" width="85" height="27" viewBox="0 0 85 27">
<path d="M7 14 L21 2.8 H83" fill="none" stroke="#b0b0b0" stroke-width="1"/>
<text x="2.5" y="21.8" font-family="Liberation Serif" font-style="italic" font-size="22" fill="#fff" stroke="#fff" stroke-width="0.2" textLength="78" lengthAdjust="spacingAndGlyphs">roSoft</text>
</svg>
<div class='t' style='top:580.82px;font-size:8.6px;font-weight:normal;color:#1a2438;left:110.1px;'>Angemeldeter Benutzer</div>
<div class='t' style='top:591.83px;font-size:8.85px;font-weight:normal;color:#1a2438;left:110.1px;'>Dieter Otter (Systemadministrator)</div>
<div class='t' style='top:580.82px;font-size:8.6px;font-weight:normal;color:#1a2438;left:385.7px;'>Datenbanksystem</div>
<div class='t' style='top:591.92px;font-size:8.6px;font-weight:normal;color:#1a2438;left:385.7px;'>Microsoft Access</div>
<div class='t' style='top:580.82px;font-size:8.6px;font-weight:normal;color:#1a2438;left:764.4px;'>Help-Desk</div>
<div class='t' style='top:591.92px;font-size:8.6px;font-weight:normal;color:#1a2438;left:764.4px;text-decoration:underline;'>support@rosoft.de</div>
<div class='t' style='top:580.75px;font-size:8.8px;font-weight:normal;color:#1a2438;right:15.600000000000023px;'>© roSoft, Roland Otter</div>
<div class='t' style='top:591.92px;font-size:8.6px;font-weight:normal;color:#1a2438;right:15.600000000000023px;text-decoration:underline;'>www.rosoft.de</div>
</body></html>
